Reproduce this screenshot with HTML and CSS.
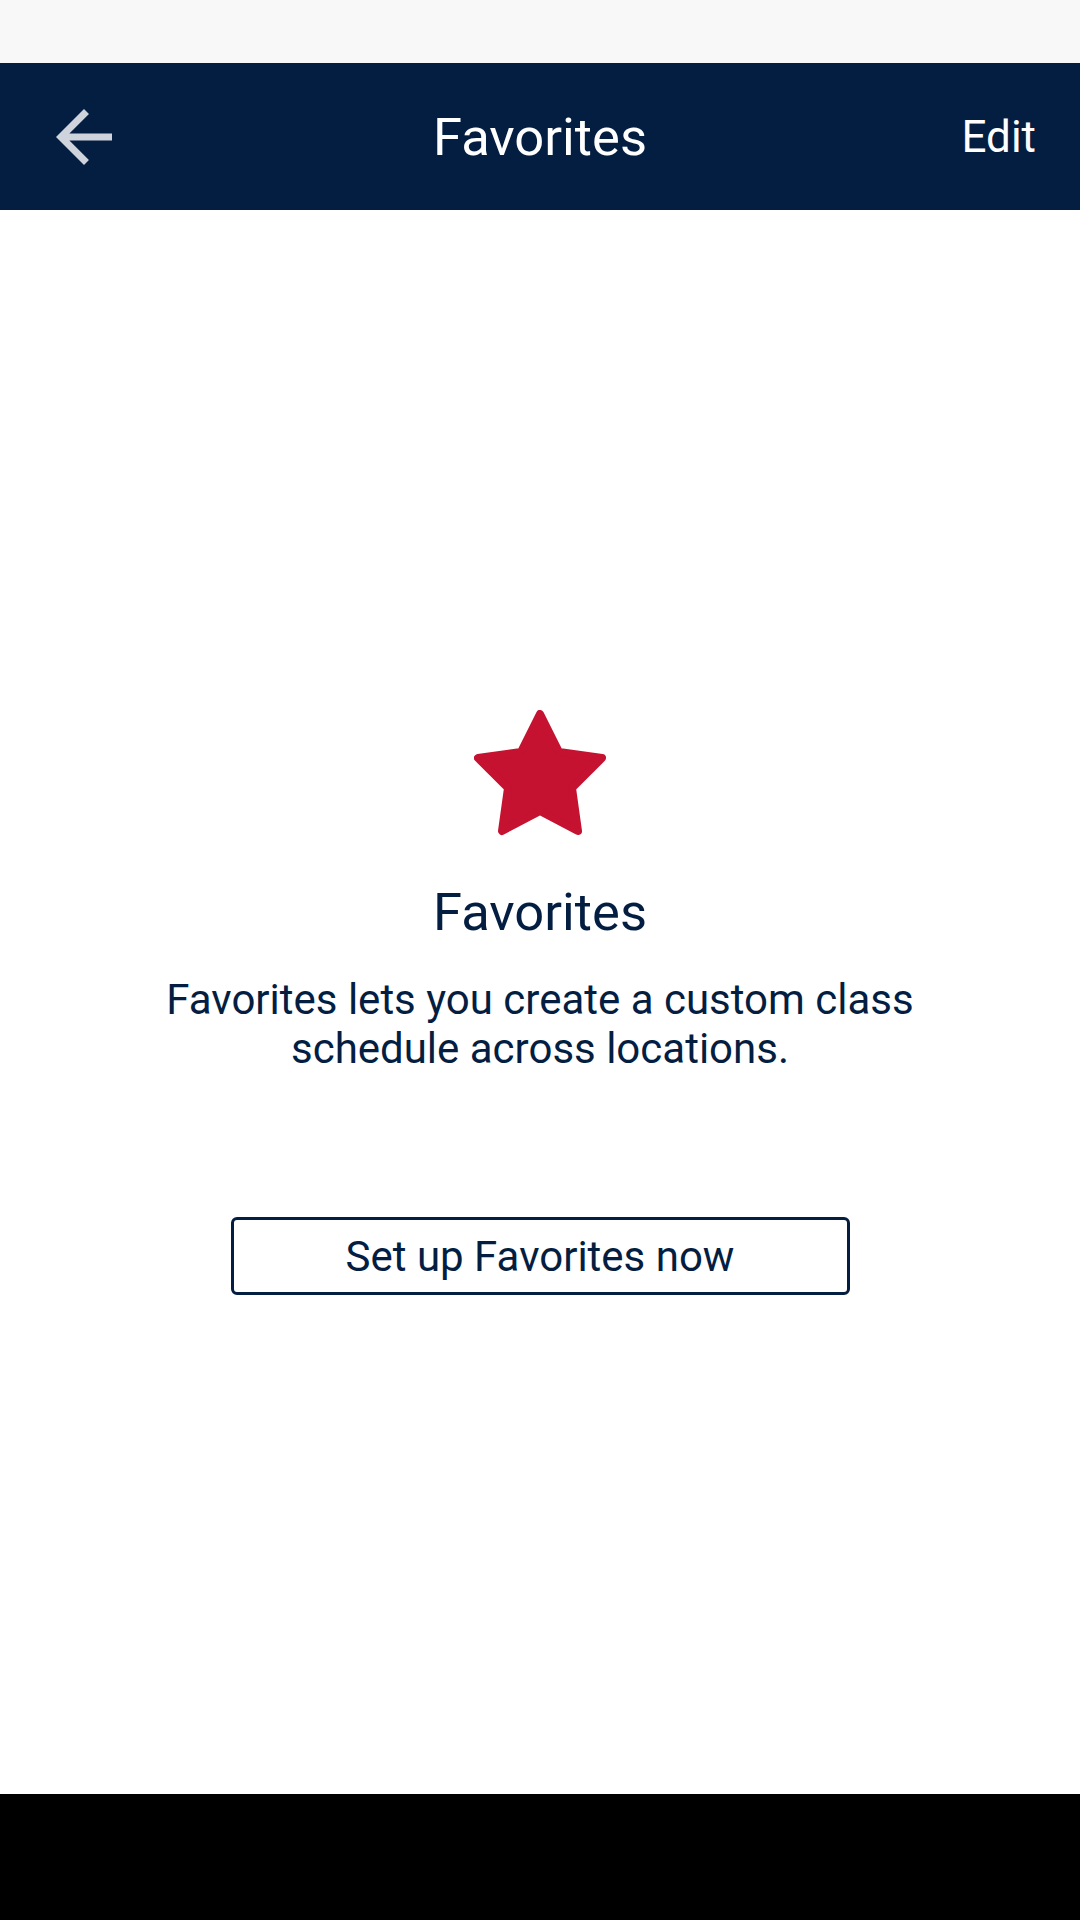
FILE: index.html
```html
<!DOCTYPE html>
<html lang="en">
<head>
<meta charset="utf-8">
<title>Favorites</title>
<link rel="stylesheet" href="styles.css">
</head>
<body>
<div class="screen">
  <div class="status-bar"></div>
  <header class="toolbar">
    <button class="back" aria-label="Back">
      <svg class="back-icon" viewBox="4 4 16 16" width="56" height="56"><path d="M20 11H7.83l5.59-5.59L12 4l-8 8 8 8 1.41-1.41L7.83 13H20v-2z"/></svg>
    </button>
    <h1 class="toolbar-title">Favorites</h1>
    <span class="edit">Edit</span>
  </header>
  <main class="content">
    <svg class="star" viewBox="0 0 132 126" width="132" height="126">
      <polygon points="66,4 85,42 128,48 98,78 104,121 66,101 28,121 34,78 4,48 47,42"/>
    </svg>
    <h2 class="heading">Favorites</h2>
    <p class="body">Favorites lets you create a custom class<br>schedule across locations.</p>
    <button class="setup">Set up Favorites now</button>
  </main>
  <div class="nav-bar"></div>
</div>
</body>
</html>
```
FILE: styles.css
```css
* { box-sizing: border-box; }
html, body { margin: 0; padding: 0; }
body {
  font-family: Roboto, "Noto Sans", sans-serif;
  background: #ffffff;
  color: #041e42;
}
.screen {
  width: 1080px;
  height: 1920px;
  display: flex;
  flex-direction: column;
}
.status-bar {
  height: 63px;
  background: #f8f8f8;
  flex: none;
}
.toolbar {
  height: 147px;
  flex: none;
  background: #041e42;
  display: grid;
  grid-template-columns: 1fr auto 1fr;
  align-items: center;
  padding: 0 44px 0 56px;
}
.back {
  background: none;
  border: 0;
  padding: 0;
  margin: 0;
  width: 56px;
  height: 56px;
  display: flex;
  justify-self: start;
}
.back-icon { fill: #cfd4dc; display: block; }
.toolbar-title {
  margin: 0 0 0 -12px;
  text-align: center;
  font-weight: 400;
  font-size: 52.5px;
  color: #ffffff;
}
.edit {
  justify-self: end;
  font-size: 44px;
  color: #ffffff;
}
.content {
  flex: 1;
  display: flex;
  flex-direction: column;
  align-items: center;
  padding-top: 500px;
}
.star {
  display: block;
  fill: #c41230;
  stroke: #c41230;
  stroke-width: 8;
  stroke-linejoin: round;
}
.heading {
  margin: 45px 0 0;
  font-weight: 400;
  font-size: 52.5px;
  line-height: 62px;
  color: #041e42;
}
.body {
  margin: 32px 0 0;
  font-size: 42px;
  line-height: 49px;
  text-align: center;
  color: #041e42;
}
.setup {
  margin-top: 144px;
  width: 619px;
  height: 78px;
  background: #ffffff;
  border: 3px solid #041e42;
  border-radius: 6px;
  font-family: Roboto, "Noto Sans", sans-serif;
  font-size: 42px;
  color: #041e42;
  padding: 0;
}
.nav-bar {
  height: 126px;
  flex: none;
  background: #000000;
}
```
